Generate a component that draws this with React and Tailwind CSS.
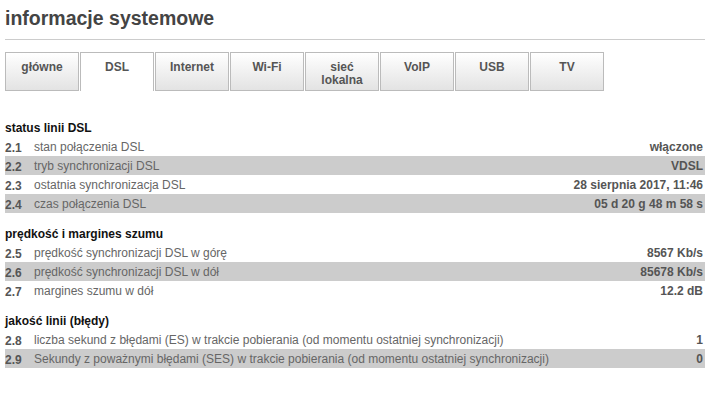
import React from 'react';

const tabs = [
  { id: 'glowne', label: 'główne' },
  { id: 'dsl', label: 'DSL', active: true },
  { id: 'internet', label: 'Internet' },
  { id: 'wifi', label: 'Wi-Fi' },
  { id: 'lan', label: ['sieć', 'lokalna'] },
  { id: 'voip', label: 'VoIP' },
  { id: 'usb', label: 'USB' },
  { id: 'tv', label: 'TV' },
];

const sections = [
  {
    title: 'status linii DSL',
    rows: [
      ['2.1', 'stan połączenia DSL', 'włączone'],
      ['2.2', 'tryb synchronizacji DSL', 'VDSL'],
      ['2.3', 'ostatnia synchronizacja DSL', '28 sierpnia 2017, 11:46'],
      ['2.4', 'czas połączenia DSL', '05 d 20 g 48 m 58 s'],
    ],
  },
  {
    title: 'prędkość i margines szumu',
    rows: [
      ['2.5', 'prędkość synchronizacji DSL w górę', '8567 Kb/s'],
      ['2.6', 'prędkość synchronizacji DSL w dół', '85678 Kb/s'],
      ['2.7', 'margines szumu w dół', '12.2 dB'],
    ],
  },
  {
    title: 'jakość linii (błędy)',
    rows: [
      ['2.8', 'liczba sekund z błędami (ES) w trakcie pobierania (od momentu ostatniej synchronizacji)', '1'],
      ['2.9', 'Sekundy z poważnymi błędami (SES) w trakcie pobierania (od momentu ostatniej synchronizacji)', '0'],
    ],
  },
];

const Tab = ({ tab }) => (
  <div
    className={
      'w-[74px] h-[39px] border border-[#bbbbbb] pt-[8px] text-center text-[12px] leading-[13px] font-bold text-[#555555] ' +
      (tab.active ? 'bg-white border-b-0' : 'bg-gradient-to-b from-white to-[#e3e3e3]')
    }
  >
    {Array.isArray(tab.label) ? tab.label.map((l) => <div key={l}>{l}</div>) : tab.label}
  </div>
);

const Section = ({ section, first }) => (
  <div className={first ? '' : 'mt-[11px]'}>
    <div className="h-[19px] flex items-center text-[12px] font-bold text-[#111111]">{section.title}</div>
    {section.rows.map(([num, label, value], i) => (
      <div
        key={num}
        className={'h-[19px] flex items-center text-[12px] ' + (i % 2 === 1 ? 'bg-[#cccccc]' : '')}
      >
        <span className="w-[29px] font-bold text-[#555555] pt-[2px]">{num}</span>
        <span className="flex-1 text-[#666666]">{label}</span>
        <span className="font-bold text-[#555555] pr-[2px]">{value}</span>
      </div>
    ))}
  </div>
);

export default function App() {
  return (
    <div className="w-[723px] h-[413px] bg-white font-['Liberation_Sans',Arial,sans-serif]">
      <div className="ml-[5px] w-[700px]">
        <h1 className="pt-[6px] h-[39px] text-[19.5px] leading-[24px] font-bold text-[#444444]">informacje systemowe</h1>
        <div className="h-px bg-[#cccccc]" />
        <div className="mt-[12px] flex gap-[1px]">
          {tabs.map((t) => (
            <Tab key={t.id} tab={t} />
          ))}
        </div>
        <div className="mt-[27px]">
          {sections.map((s, i) => (
            <Section key={s.title} section={s} first={i === 0} />
          ))}
        </div>
      </div>
    </div>
  );
}
